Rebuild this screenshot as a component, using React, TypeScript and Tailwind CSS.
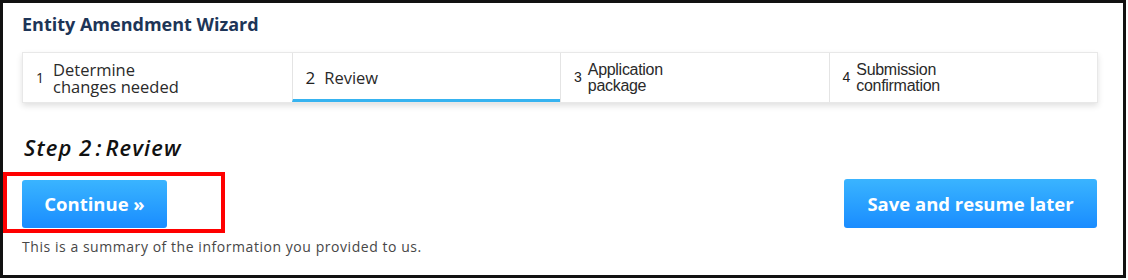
import React from "react";

type Step = { n: number; lines: string[]; active?: boolean; narrow?: boolean };

const STEPS: Step[] = [
  { n: 1, lines: ["Determine", "changes needed"] },
  { n: 2, lines: ["Review"], active: true },
  { n: 3, lines: ["Application", "package"], narrow: true },
  { n: 4, lines: ["Submission", "confirmation"], narrow: true },
];

function StepTab({ step, first }: { step: Step; first: boolean }) {
  return (
    <div
      className={`flex h-full items-center pl-[13px] ${
        first ? "" : "border-l border-[#e4e4e4]"
      } ${step.active ? "border-b-[3px] border-b-[#36b3f0] pt-[3px]" : ""} ${
        step.narrow ? "gap-[6px]" : "gap-[9px]"
      }`}
    >
      <span
        className={`${
          step.narrow
            ? "font-['Liberation_Sans',Arial,sans-serif] text-[14px]"
            : "font-['Open_Sans',sans-serif] text-[14px]"
        } ${step.n === 2 ? "text-[17px]" : ""} text-[#222]`}
      >
        {step.n}
      </span>
      <div
        className={`${
          step.narrow
            ? "font-['Liberation_Sans',Arial,sans-serif] text-[16px] leading-[16px] tracking-[-0.3px]"
            : "font-['Open_Sans',sans-serif] text-[16.5px] leading-[17px]"
        } text-[#2a2a2a]`}
      >
        {step.lines.map((l) => (
          <div key={l}>{l}</div>
        ))}
      </div>
    </div>
  );
}

export default function App() {
  return (
    <div className="relative h-[280px] w-[1128px] bg-white">
      <div className="h-[278px] w-[1126px] border-[3px] border-[#111] px-[19px] pt-[9px]">
        {/* title */}
        <h1 className="font-['Open_Sans',sans-serif] text-[18px] font-bold leading-[24px] text-[#1d3557]">
          Entity Amendment Wizard
        </h1>

        {/* stepper */}
        <div className="mt-[16px] grid h-[51px] w-[1076px] grid-cols-4 border border-[#e8e8e8] bg-white shadow-[0_3px_6px_rgba(0,0,0,0.12)]">
          {STEPS.map((s, i) => (
            <StepTab key={s.n} step={s} first={i === 0} />
          ))}
        </div>

        {/* heading */}
        <h2 className="ml-[2px] mt-[30px] font-['Open_Sans',sans-serif] text-[22px] font-semibold italic leading-[29px] tracking-[1.1px] text-[#111]">
          Step 2<span className="mx-[3px]">:</span>Review
        </h2>

        {/* actions */}
        <div className="mt-[17px] flex w-[1075px] items-center justify-between">
          <button className="h-[48px] w-[145px] rounded-[3px] bg-gradient-to-b from-[#3ab4ff] to-[#1a8cff] font-['Open_Sans',sans-serif] text-[18.5px] font-bold text-white">
            Continue »
          </button>
          <button className="h-[49px] w-[253px] rounded-[3px] bg-gradient-to-b from-[#3ab4ff] to-[#1a8cff] font-['Open_Sans',sans-serif] text-[18.5px] font-bold text-white">
            Save and resume later
          </button>
        </div>

        <p className="mt-[9px] font-['Open_Sans',sans-serif] text-[14px] font-medium leading-[19px] tracking-[0.55px] text-[#474747]">
          This is a summary of the information you provided to us.
        </p>
      </div>

      {/* annotation highlight */}
      <div className="absolute left-[3px] top-[172px] h-[61px] w-[222px] border-[4px] border-[#ff0000]" />
    </div>
  );
}
